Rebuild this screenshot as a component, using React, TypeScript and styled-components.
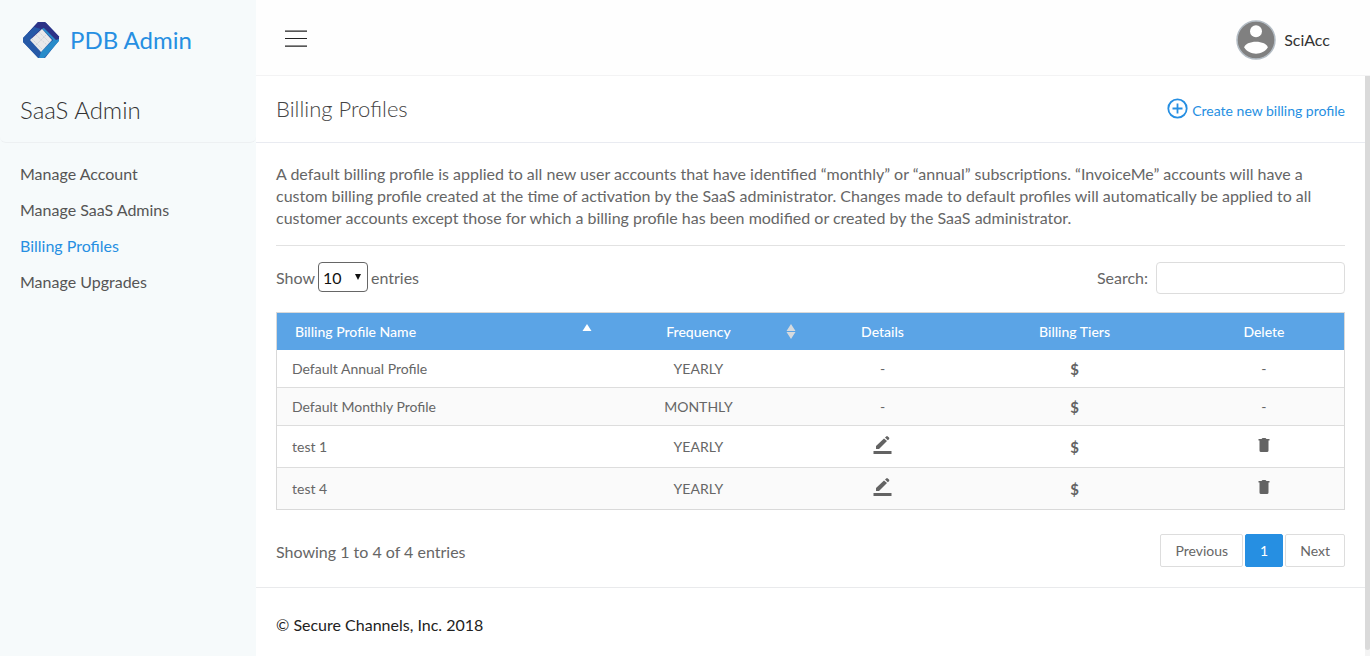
import React from "react";
import styled, { createGlobalStyle } from "styled-components";

const GlobalStyle = createGlobalStyle`
  *, *::before, *::after { box-sizing: border-box; }
  body {
    margin: 0;
    background: #ffffff;
    color: #666666;
    font-family: Lato, "Liberation Sans", sans-serif;
    font-size: 16px;
    line-height: 22px;
  }
  a { color: inherit; text-decoration: none; }
  button, input, select { font: inherit; }
`;

const Shell = styled.div`
  display: grid;
  grid-template-columns: 256px minmax(0, 1fr);
  height: 100vh;
`;

const Sidebar = styled.aside`
  background: #f6fafb;
`;

const Brand = styled.a`
  display: flex;
  align-items: center;
  gap: 10px;
  height: 80px;
  padding: 0 22px;
  color: #268fe2;
  font-size: 24px;
  line-height: 30px;
`;

const SidebarTitle = styled.h2`
  display: flex;
  align-items: center;
  height: 63px;
  margin: 0;
  padding: 0 20px 2px;
  border-bottom: 1px solid #edf0f2;
  border-radius: 0 0 6px 6px;
  color: #333333;
  font-size: 24px;
  font-weight: 300;
`;

const Menu = styled.nav`
  display: flex;
  flex-direction: column;
  padding: 13px 20px;
`;

const MenuLink = styled.a<{ $active?: boolean }>`
  line-height: 36px;
  color: ${(p) => (p.$active ? "#268fe2" : "#555555")};
`;

const Main = styled.div`
  display: flex;
  flex-direction: column;
  height: 100vh;
`;

const TopBar = styled.header`
  display: flex;
  flex: none;
  align-items: center;
  justify-content: space-between;
  height: 76px;
  padding: 4px 40px 0 28px;
  border-bottom: 1px solid #f3f3f4;
  background: #fefefe;
`;

const MenuButton = styled.button`
  display: flex;
  padding: 0 0 2px;
  border: 0;
  background: none;
  color: #222222;
  cursor: pointer;
`;

const User = styled.a`
  display: flex;
  align-items: center;
  gap: 8px;
  color: #333333;
`;

const Body = styled.div`
  display: flex;
  flex: 1;
  min-height: 0;
`;

const ScrollArea = styled.div`
  flex: 1;
  min-width: 0;
  overflow: hidden;
`;

const ScrollTrack = styled.div`
  display: flex;
  width: 5px;
  padding-bottom: 6px;
  background: #f4f4f4;
`;

const ScrollThumb = styled.div`
  flex: 1;
  border-radius: 0 0 3px 3px;
  background: #dadada;
`;

const TitleBar = styled.div`
  display: flex;
  align-items: center;
  justify-content: space-between;
  height: 67px;
  padding: 0 20px;
  border-bottom: 1px solid #e9ebf1;
`;

const PageTitle = styled.h1`
  margin: 0;
  color: #444444;
  font-size: 22px;
  font-weight: 300;
`;

const CreateLink = styled.a`
  display: flex;
  align-items: center;
  gap: 4px;
  color: #268fe2;
  font-size: 14px;

  svg { margin-bottom: 2px; }
  span { padding-top: 4px; }
`;

const Content = styled.main`
  padding: 20px;
`;

const Intro = styled.p`
  margin: 0;
  padding-bottom: 16px;
  border-bottom: 1px solid #e2e2e2;
`;

const Spread = styled.div`
  display: flex;
  align-items: center;
  justify-content: space-between;
`;

const Filters = styled(Spread)`
  align-items: flex-start;
  padding: 16px 0 18px;
`;

const LengthLabel = styled.label`
  display: flex;
  align-items: center;
  gap: 3px;
  line-height: 32px;
`;

const SelectBox = styled.span`
  display: grid;
  align-items: center;
  align-self: flex-start;
  width: 50px;
  height: 30px;

  > * { grid-area: 1 / 1; }
  svg { justify-self: end; margin-right: 6px; pointer-events: none; }
`;

const LengthSelect = styled.select`
  appearance: none;
  width: 100%;
  height: 30px;
  padding: 2px 4px 0;
  border: 1px solid #666666;
  border-radius: 4px;
  background: #ffffff;
  color: #111111;
  line-height: 24px;
`;

const SearchLabel = styled.label`
  display: flex;
  align-items: center;
  gap: 8px;
`;

const SearchInput = styled.input`
  width: 189px;
  height: 32px;
  padding: 0 8px;
  border: 1px solid #dddddd;
  border-radius: 4px;
  background: #ffffff;
`;

const Table = styled.table`
  width: 100%;
  table-layout: fixed;
  border: 1px solid #d9d9d9;
  border-collapse: separate;
  border-spacing: 0;
  font-size: 14px;
  line-height: 20px;
`;

const Head = styled.th<{ $width: string; $left?: boolean }>`
  width: ${(p) => p.$width};
  height: 37px;
  padding: ${(p) => (p.$left ? "0 5px 0 18px" : "0 4px")};
  background: #5ba4e6;
  color: #ffffff;
  font-weight: 500;
  text-align: ${(p) => (p.$left ? "left" : "center")};
`;

const HeadInner = styled.span<{ $left?: boolean }>`
  display: grid;
  grid-template-columns: ${(p) => (p.$left ? "1fr 10px" : "10px 1fr 10px")};
  align-items: center;

  svg { display: block; }
`;

const Row = styled.tr<{ $tall?: boolean }>`
  height: ${(p) => (p.$tall ? 42 : 38)}px;

  &:nth-child(even) { background: #fafafa; }
  &:first-child { height: 37px; }
`;

const Cell = styled.td<{ $left?: boolean }>`
  padding: ${(p) => (p.$left ? "0 15px" : "0 8px")};
  text-align: ${(p) => (p.$left ? "left" : "center")};

  ${Row} + ${Row} > & { border-top: 1px solid #dddddd; }
`;

const IconButton = styled.button`
  display: block;
  margin: 0 auto;
  padding: 0;
  border: 0;
  background: none;
  color: #636363;
  cursor: pointer;

  svg { display: block; margin-bottom: 2px; }
`;

const TierButton = styled(IconButton)`
  font-size: 15px;
  font-weight: 700;
`;

const TableFooter = styled(Spread)`
  padding-top: 24px;
`;

const Status = styled.span`
  padding-top: 2px;
`;

const Pager = styled.nav`
  display: flex;
  gap: 2px;
`;

const PageButton = styled.button<{ $current?: boolean }>`
  height: 33px;
  padding: 0 14px;
  border: 1px solid ${(p) => (p.$current ? "#268fe2" : "#dddddd")};
  border-radius: 2px;
  background: ${(p) => (p.$current ? "#268fe2" : "#ffffff")};
  color: ${(p) => (p.$current ? "#ffffff" : "#666666")};
  font-size: 14px;
  cursor: pointer;
`;

const Footer = styled.footer`
  padding: 26px 20px;
  border-top: 1px solid #e9eaec;
  color: #222222;
`;

const Logo = () => (
  <svg width="38" height="38" viewBox="0 0 38 38" aria-hidden="true">
    <path d="M16 1h7l14 14.500v4L23 37h-6L1 21v-4z" fill="#2a58a6" />
    <path d="M16 1h7l14 14.500v3l-6 2L20 8l-9 10-5-6z" fill="#2c3287" />
    <path d="M1 17 12 6l7 2L7 19l12 12-1 6h-2L1 21z" fill="#2659a7" />
    <path d="M37 17v3L22 37h-5l2-6 12-12L20 8l3-2 12 11z" fill="#278bc9" />
    <path d="m24 2 13 14v2l-3 1L21 6l-4-2z" fill="#2c3287" />
    <path d="m20 8 10 11-11 12L8 19z" fill="#e8e9ea" />
    <path d="m14 14 11 10M17 11l10 10M10 18l10 10M24 14 14 24" stroke="#d0d4d8" strokeDasharray="2 1" fill="none" />
  </svg>
);

const Avatar = () => (
  <svg width="40" height="40" viewBox="0 0 40 40" aria-hidden="true">
    <circle cx="20" cy="20" r="19" fill="#808080" stroke="#b3bcc4" strokeWidth="1.500" />
    <circle cx="20" cy="11.200" r="6" fill="#ffffff" />
    <path d="M8.300 27.500c0-3.600 6.200-5.800 11.700-5.800s11.700 2.200 11.700 5.800c-2.500 4-7 6.200-11.700 6.200s-9.200-2.200-11.700-6.200z" fill="#ffffff" />
  </svg>
);

const Bars = () => (
  <svg width="24" height="18" viewBox="0 0 24 18" aria-hidden="true">
    <path d="M1 .4h22v.6H1zM1 8h22v1H1zM1 15.600h22v.4H1z" fill="currentColor" />
    <path d="M1 1h22v.7H1zM1 16h22v.8H1z" fill="currentColor" />
  </svg>
);

const PlusCircle = () => (
  <svg width="21" height="21" viewBox="0 0 21 21" fill="none" stroke="currentColor" aria-hidden="true">
    <circle cx="10.500" cy="10.500" r="9.200" strokeWidth="1.800" />
    <path d="M10.500 5.500v10M5.500 10.500h10" strokeWidth="1.800" />
  </svg>
);

const Pencil = () => (
  <svg width="20" height="22" viewBox="0 0 20 22" fill="currentColor" aria-hidden="true">
    <path d="M.5 16h18v3H.5zM3 14v-3L11 3.500l3 2.500L6 14zM12 2.600l1.200-1.200q.8-.7 1.600 0l1.200 1.200q.7.800 0 1.600L14.800 5.300z" />
  </svg>
);

const Trash = () => (
  <svg width="12" height="18" viewBox="0 0 12 18" fill="currentColor" aria-hidden="true">
    <path d="M.5 2H3.500l1-1h3l1 1h3v1.500h-1v10q0 1.500-1.500 1.500H3q-1.500 0-1.500-1.500v-10h-1z" />
  </svg>
);

const SortIcon = ({ both }: { both?: boolean }) => (
  <svg width="10" height="20" viewBox="0 0 10 20" aria-hidden="true">
    {both ? (
      <path d="M.5 9 5 2l4.500 7zM.5 10h9L5 17z" fill="#d6dade" />
    ) : (
      <path d="M.5 9 5 2l4.500 7z" fill="#ffffff" />
    )}
  </svg>
);

const menu = ["Manage Account", "Manage SaaS Admins", "Billing Profiles", "Manage Upgrades"];

const profiles = [
  { name: "Default Annual Profile", frequency: "YEARLY", editable: false },
  { name: "Default Monthly Profile", frequency: "MONTHLY", editable: false },
  { name: "test 1", frequency: "YEARLY", editable: true },
  { name: "test 4", frequency: "YEARLY", editable: true },
];

export default function App() {
  return (
    <>
      <GlobalStyle />
      <Shell>
        <Sidebar>
          <Brand href="#home">
            <Logo />
            PDB Admin
          </Brand>
          <SidebarTitle>SaaS Admin</SidebarTitle>
          <Menu>
            {menu.map((item) => (
              <MenuLink key={item} href="#menu" $active={item === "Billing Profiles"}>
                {item}
              </MenuLink>
            ))}
          </Menu>
        </Sidebar>
        <Main>
          <TopBar>
            <MenuButton aria-label="Toggle menu">
              <Bars />
            </MenuButton>
            <User href="#user">
              <Avatar />
              SciAcc
            </User>
          </TopBar>
          <Body>
            <ScrollArea>
              <TitleBar>
                <PageTitle>Billing Profiles</PageTitle>
                <CreateLink href="#create">
                  <PlusCircle />
                  <span>Create new billing profile</span>
                </CreateLink>
              </TitleBar>
              <Content>
                <Intro>
                  A default billing profile is applied to all new user accounts that have identified “monthly” or
                  “annual” subscriptions. “InvoiceMe” accounts will have a custom billing profile created at the time
                  of activation by the SaaS administrator. Changes made to default profiles will automatically be
                  applied to all customer accounts except those for which a billing profile has been modified or
                  created by the SaaS administrator.
                </Intro>
                <Filters>
                  <LengthLabel htmlFor="length">
                    Show
                    <SelectBox>
                      <LengthSelect id="length" defaultValue="10">
                        <option>10</option>
                        <option>25</option>
                        <option>50</option>
                      </LengthSelect>
                      <svg width="8" height="8" viewBox="0 0 8 8" aria-hidden="true">
                        <path d="M1 1h6L4 7z" fill="#111111" />
                      </svg>
                    </SelectBox>
                    entries
                  </LengthLabel>
                  <SearchLabel htmlFor="search">
                    Search:
                    <SearchInput id="search" type="search" />
                  </SearchLabel>
                </Filters>
                <Table>
                  <thead>
                    <tr>
                      <Head $width="30%" $left>
                        <HeadInner $left>
                          Billing Profile Name
                          <SortIcon />
                        </HeadInner>
                      </Head>
                      <Head $width="19%">
                        <HeadInner>
                          <i />
                          Frequency
                          <SortIcon both />
                        </HeadInner>
                      </Head>
                      <Head $width="15.5%">Details</Head>
                      <Head $width="20.5%">Billing Tiers</Head>
                      <Head $width="15%">Delete</Head>
                    </tr>
                  </thead>
                  <tbody>
                    {profiles.map((p) => (
                      <Row key={p.name} $tall={p.editable}>
                        <Cell $left>{p.name}</Cell>
                        <Cell>{p.frequency}</Cell>
                        <Cell>
                          {p.editable ? (
                            <IconButton aria-label={`Edit ${p.name}`}>
                              <Pencil />
                            </IconButton>
                          ) : (
                            "-"
                          )}
                        </Cell>
                        <Cell>
                          <TierButton>$</TierButton>
                        </Cell>
                        <Cell>
                          {p.editable ? (
                            <IconButton aria-label={`Delete ${p.name}`}>
                              <Trash />
                            </IconButton>
                          ) : (
                            "-"
                          )}
                        </Cell>
                      </Row>
                    ))}
                  </tbody>
                </Table>
                <TableFooter>
                  <Status>Showing 1 to 4 of 4 entries</Status>
                  <Pager aria-label="Pages">
                    <PageButton>Previous</PageButton>
                    <PageButton $current>1</PageButton>
                    <PageButton>Next</PageButton>
                  </Pager>
                </TableFooter>
              </Content>
              <Footer>© Secure Channels, Inc. 2018</Footer>
            </ScrollArea>
            <ScrollTrack>
              <ScrollThumb />
            </ScrollTrack>
          </Body>
        </Main>
      </Shell>
    </>
  );
}
